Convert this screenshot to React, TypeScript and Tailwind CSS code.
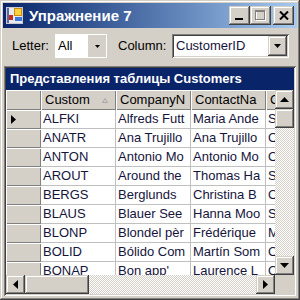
import React from 'react';

// Classic (Windows 2000 style) bevels
const RAISED =
  'bg-[#d4d0c8] shadow-[inset_-1px_-1px_#404040,inset_1px_1px_#d4d0c8,inset_-2px_-2px_#808080,inset_2px_2px_#ffffff]';
const SUNKEN =
  'shadow-[inset_1px_1px_#808080,inset_-1px_-1px_#ffffff,inset_2px_2px_#404040,inset_-2px_-2px_#d4d0c8]';
const CHECKER =
  'bg-[repeating-conic-gradient(#d4d0c8_0%_25%,#ffffff_0%_50%)] bg-[length:2px_2px]';

const rows = [
  ['ALFKI', 'Alfreds Futt', 'Maria Ande', 'Sales Representative'],
  ['ANATR', 'Ana Trujillo', 'Ana Trujillo', 'Owner'],
  ['ANTON', 'Antonio Mo', 'Antonio Mo', 'Owner'],
  ['AROUT', 'Around the', 'Thomas Ha', 'Sales Representative'],
  ['BERGS', 'Berglunds', 'Christina B', 'Order Administrator'],
  ['BLAUS', 'Blauer See', 'Hanna Moo', 'Sales Representative'],
  ['BLONP', 'Blondel pèr', 'Frédérique', 'Marketing Manager'],
  ['BOLID', 'Bólido Com', 'Martín Som', 'Owner'],
  ['BONAP', "Bon app'", 'Laurence L', 'Owner'],
];

const Arrow = ({ dir, w = 7, h = 4 }: { dir: 'up' | 'down' | 'left' | 'right'; w?: number; h?: number }) => {
  const pts =
    dir === 'up'
      ? `0,${h} ${w},${h} ${w / 2},0`
      : dir === 'down'
        ? `0,0 ${w},0 ${w / 2},${h}`
        : dir === 'left'
          ? `${h},0 ${h},${w} 0,${w / 2}`
          : `0,0 0,${w} ${h},${w / 2}`;
  const vw = dir === 'up' || dir === 'down' ? w : h;
  const vh = dir === 'up' || dir === 'down' ? h : w;
  return (
    <svg width={vw} height={vh} viewBox={`0 0 ${vw} ${vh}`}>
      <polygon points={pts} fill="#000" />
    </svg>
  );
};

const AppIcon = () => (
  <svg width="17" height="17" viewBox="0 0 17 17">
    <rect x="0.5" y="0.5" width="16" height="16" fill="#e8e8f0" stroke="#c8c8d0" />
    <rect x="1" y="1" width="2" height="15" fill="#5a6aa0" />
    <rect x="3" y="8" width="4" height="5" fill="#c8281e" />
    <rect x="8.5" y="1.5" width="7" height="7" fill="#f8d43a" stroke="#d08a10" />
    <rect x="9" y="10" width="7" height="4" fill="#3c78d8" />
  </svg>
);

function TitleBar() {
  return (
    <div className="h-[25px] flex items-center bg-linear-to-r from-[#0a246a] to-[#a6caf0] pl-[3px] pr-[3px]">
      <AppIcon />
      <span className="ml-[6px] text-white font-bold text-[15px] leading-none">Упражнение 7</span>
      <div className="ml-auto flex">
        <div className={`${RAISED} w-[21px] h-[19px] relative`}>
          <div className="absolute left-[6px] top-[12px] w-[8px] h-[2px] bg-black" />
        </div>
        <div className={`${RAISED} w-[21px] h-[19px] flex items-center justify-center`}>
          <svg width="11" height="11" viewBox="0 0 11 11">
            <rect x="1.5" y="1.5" width="9" height="9" fill="none" stroke="#ffffff" />
            <rect x="0.5" y="0.5" width="9" height="9" fill="none" stroke="#808080" />
            <line x1="0.5" y1="1.5" x2="9.5" y2="1.5" stroke="#808080" />
          </svg>
        </div>
        <div className={`${RAISED} ml-[2px] w-[21px] h-[19px] flex items-center justify-center`}>
          <svg width="10" height="9" viewBox="0 0 10 9">
            <path d="M1 0.5 L9 8.5 M9 0.5 L1 8.5" stroke="#000" strokeWidth="2" />
          </svg>
        </div>
      </div>
    </div>
  );
}

function Controls() {
  return (
    <div className="h-[38px] flex items-start pt-[6px] text-[13px]">
      <div className="ml-[9px] w-[43px] h-[24px] flex items-center text-black">Letter:</div>
      <div className="w-[52px] h-[24px] bg-white border border-white flex">
        <div className="flex-1 flex items-center pl-[2px] text-black">All</div>
        <div className="w-[18px] bg-[#d4d0c8] flex items-center justify-center">
          <Arrow dir="down" w={5} h={3} />
        </div>
      </div>
      <div className="ml-[11px] w-[54px] h-[24px] flex items-center text-black">Column:</div>
      <div className={`${SUNKEN} w-[117px] h-[24px] bg-white flex p-[2px]`}>
        <div className="flex-1 flex items-center pl-[2px] text-[#14143c]">CustomerID</div>
        <div className={`${RAISED} w-[19px] flex items-center justify-center`}>
          <Arrow dir="down" w={7} h={4} />
        </div>
      </div>
    </div>
  );
}

function DataGrid() {
  return (
    <div className={`${SUNKEN} mx-[1px] mb-[1px] flex-1 flex flex-col p-[2px] bg-[#d4d0c8] min-h-0`}>
      <div className="h-[22px] bg-[#0a246a] text-white font-bold text-[13px] flex items-center pl-[4px] shrink-0">
        Представления таблицы Customers
      </div>
      <div className="flex-1 flex min-h-0">
        <div className="flex-1 overflow-hidden bg-white text-[13px]">
          {/* column headers */}
          <div className="h-[20px] flex bg-[#d4d0c8] whitespace-nowrap">
            <div className="w-[35px] shrink-0 shadow-[inset_1px_1px_#ffffff,inset_-1px_-1px_#808080]" />
            <div className="w-[75px] shrink-0 flex items-center pl-[4px] pr-[8px] shadow-[inset_1px_1px_#ffffff,inset_-1px_-1px_#808080] relative">
              <span className="text-black">Custom</span>
              <svg className="absolute left-[61px] top-[8px]" width="6" height="5" viewBox="0 0 6 5">
                <polygon points="0.5,4.5 5.5,4.5 3,0.5" fill="none" stroke="#a8a8a8" />
              </svg>
            </div>
            <div className="w-[75px] shrink-0 flex items-center pl-[4px] shadow-[inset_1px_1px_#ffffff,inset_-1px_-1px_#808080] text-black">
              CompanyN
            </div>
            <div className="w-[75px] shrink-0 flex items-center pl-[4px] shadow-[inset_1px_1px_#ffffff,inset_-1px_-1px_#808080] text-black">
              ContactNa
            </div>
            <div className="w-[75px] shrink-0 flex items-center pl-[4px] shadow-[inset_1px_1px_#ffffff,inset_-1px_-1px_#808080] text-black">
              ContactTitle
            </div>
          </div>
          {rows.map((r, i) => (
            <div key={r[0]} className="h-[19px] flex whitespace-nowrap text-[#14143c]">
              <div className="w-[35px] shrink-0 bg-[#d4d0c8] flex items-center pl-[5px] shadow-[inset_1px_1px_#ffffff,inset_-1px_-1px_#808080]">
                {i === 0 && (
                  <svg width="5" height="9" viewBox="0 0 5 9">
                    <polygon points="0,0 5,4.5 0,9" fill="#000" />
                  </svg>
                )}
              </div>
              {r.map((c, j) => (
                <div
                  key={j}
                  className="w-[75px] shrink-0 overflow-hidden flex items-center pl-[2px] border-r border-b border-[#c0c0c0]"
                >
                  {c}
                </div>
              ))}
            </div>
          ))}
        </div>
        {/* vertical scrollbar */}
        <div className="w-[19px] flex flex-col shrink-0">
          <div className={`${RAISED} h-[19px] flex items-center justify-center`}>
            <Arrow dir="up" w={9} h={5} />
          </div>
          <div className={`${RAISED} h-[19px]`} />
          <div className={`flex-1 ${CHECKER}`} />
          <div className={`${RAISED} h-[19px] flex items-center justify-center`}>
            <Arrow dir="down" w={9} h={5} />
          </div>
        </div>
      </div>
      {/* horizontal scrollbar */}
      <div className="h-[19px] flex shrink-0">
        <div className={`${RAISED} w-[19px] flex items-center justify-center`}>
          <Arrow dir="left" w={9} h={5} />
        </div>
        <div className={`${RAISED} w-[64px]`} />
        <div className={`flex-1 ${CHECKER}`} />
        <div className={`${RAISED} w-[19px] flex items-center justify-center`}>
          <Arrow dir="right" w={9} h={5} />
        </div>
        <div className="w-[19px] bg-[#d4d0c8]" />
      </div>
    </div>
  );
}

export default function App() {
  return (
    <div className="w-[300px] h-[300px] bg-[#d4d0c8] p-[3px] flex flex-col font-['Liberation_Sans',Arial,sans-serif] shadow-[inset_-1px_-1px_#404040,inset_1px_1px_#d4d0c8,inset_-2px_-2px_#808080,inset_2px_2px_#ffffff]">
      <TitleBar />
      <Controls />
      <DataGrid />
    </div>
  );
}
